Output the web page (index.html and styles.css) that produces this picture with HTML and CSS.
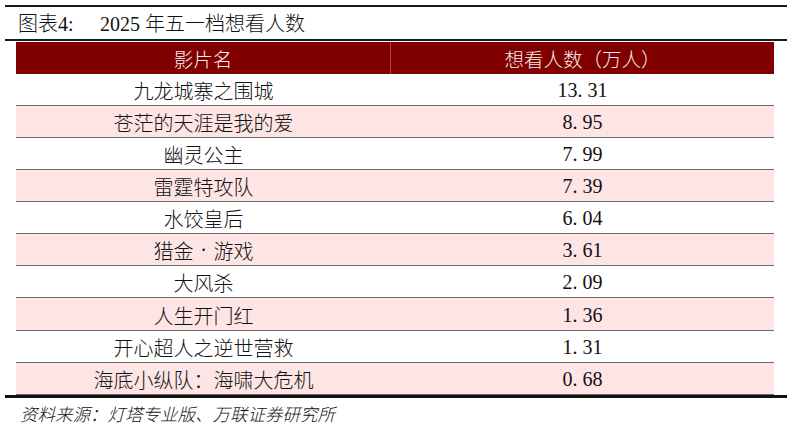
FILE: index.html
```html
<!DOCTYPE html>
<html lang="zh-CN">
<head>
<meta charset="utf-8">
<title>2025年五一档想看人数</title>
<link rel="stylesheet" href="styles.css">
</head>
<body>
<div class="page">
  <div class="rule rule-top"></div>
  <div class="title"><span class="label">图表4:</span>2025 年五一档想看人数</div>
  <div class="rule rule-mid"></div>
  <div class="table">
    <div class="row head">
      <div class="cell name">影片名</div>
      <div class="cell num">想看人数（万人）</div>
    </div>
    <div class="row"><div class="cell name">九龙城寨之围城</div><div class="cell num">13<span class="dot">.</span>31</div></div>
    <div class="row alt"><div class="cell name">苍茫的天涯是我的爱</div><div class="cell num">8<span class="dot">.</span>95</div></div>
    <div class="row"><div class="cell name">幽灵公主</div><div class="cell num">7<span class="dot">.</span>99</div></div>
    <div class="row alt"><div class="cell name">雷霆特攻队</div><div class="cell num">7<span class="dot">.</span>39</div></div>
    <div class="row"><div class="cell name">水饺皇后</div><div class="cell num">6<span class="dot">.</span>04</div></div>
    <div class="row alt"><div class="cell name">猎金<span class="mid">·</span>游戏</div><div class="cell num">3<span class="dot">.</span>61</div></div>
    <div class="row"><div class="cell name">大风杀</div><div class="cell num">2<span class="dot">.</span>09</div></div>
    <div class="row alt"><div class="cell name">人生开门红</div><div class="cell num">1<span class="dot">.</span>36</div></div>
    <div class="row"><div class="cell name">开心超人之逆世营救</div><div class="cell num">1<span class="dot">.</span>31</div></div>
    <div class="row alt"><div class="cell name">海底小纵队：海啸大危机</div><div class="cell num">0<span class="dot">.</span>68</div></div>
  </div>
  <div class="rule rule-bottom"></div>
  <div class="source">资料来源：灯塔专业版、万联证券研究所</div>
</div>
</body>
</html>
```

FILE: styles.css
```css
html, body {
  margin: 0;
  padding: 0;
  background: #ffffff;
}

.page {
  width: 793px;
  height: 429px;
  padding-top: 5px;
  box-sizing: border-box;
  font-family: "Liberation Serif", "Noto Sans CJK SC", serif;
  color: #111111;
}

.rule {
  margin-left: 5px;
  width: 782px;
  background: #1a1a1a;
}

.rule-top {
  height: 2px;
}

.rule-mid {
  height: 2px;
}

.rule-bottom {
  height: 3px;
  background: #111111;
}

.title {
  height: 32px;
  line-height: 34px;
  padding-left: 18px;
  font-size: 20px;
  font-weight: 300;
  white-space: nowrap;
}

.title .label {
  display: inline-block;
  width: 82px;
}

.table {
  margin-left: 16px;
  width: 758px;
  padding-top: 1px;
}

.row {
  display: grid;
  grid-template-columns: 375px 383px;
  height: 32.15px;
  box-sizing: border-box;
  border-bottom: 1px solid #6a6a6a;
  font-size: 20px;
  font-weight: 300;
}

.row.alt {
  background: #fde5e5;
}

.row.head {
  height: 31.5px;
  background: #800000;
  color: #f6eeee;
  border-bottom: none;
  font-size: 19.5px;
}

.row.head .name {
  border-right: 1px solid #a84a4a;
}

.cell {
  display: flex;
  align-items: center;
  justify-content: center;
  white-space: nowrap;
  padding-top: 2px;
  box-sizing: border-box;
}

.cell .dot {
  display: inline-block;
  width: 10px;
}

.cell .mid {
  display: inline-block;
  width: 20px;
  text-align: center;
}

.source {
  margin-top: 5px;
  padding-left: 20px;
  line-height: 24px;
  font-size: 17.5px;
  font-style: italic;
  font-weight: 300;
  white-space: nowrap;
}
```
